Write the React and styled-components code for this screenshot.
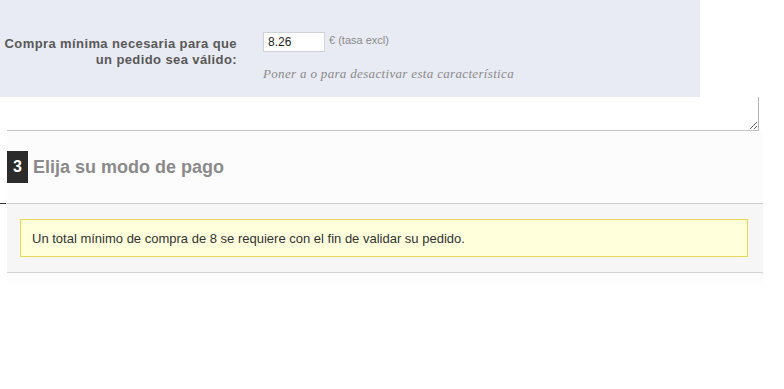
import React from "react"
import styled, {createGlobalStyle} from "styled-components"

const GlobalStyle = createGlobalStyle`
  body {
    margin: 0;
    background: #ffffff;
    font-family: "Liberation Sans", Arial, sans-serif;
  }
`

const Page = styled.div`
  width: 784px;
  height: 389px;
  overflow: hidden;
  background: #ffffff;
`

const SettingsPanel = styled.div`
  width: 700px;
  height: 97px;
  box-sizing: border-box;
  padding-top: 32px;
  background: #e8ebf3;
  display: flex;
  align-items: flex-start;
`

const FieldLabel = styled.label`
  width: 237px;
  padding-top: 4px;
  text-align: right;
  font-size: 13px;
  line-height: 16px;
  font-weight: bold;
  letter-spacing: 0.4px;
  color: #585858;
`

const FieldBody = styled.div`
  margin-left: 26px;
  display: flex;
  flex-direction: column;
`

const InputRow = styled.div`
  display: flex;
  align-items: flex-start;
`

const AmountInput = styled.input`
  width: 62px;
  height: 20px;
  box-sizing: border-box;
  padding: 0 4px;
  border: 1px solid #cfd2d8;
  background: #ffffff;
  font-family: "Liberation Sans", Arial, sans-serif;
  font-size: 12px;
  color: #222;
  outline: none;
`

const Unit = styled.span`
  margin-left: 4px;
  margin-top: 2px;
  font-size: 11px;
  color: #8a8a8a;
`

const Hint = styled.p`
  margin: 14px 0 0;
  font-family: "Liberation Serif", Georgia, serif;
  font-style: italic;
  font-size: 13px;
  letter-spacing: 0.33px;
  color: #8a8a8a;
`

const Notes = styled.textarea`
  display: block;
  margin-left: 7px;
  width: 752px;
  height: 34px;
  box-sizing: border-box;
  border: none;
  border-right: 1px solid #b4b4b4;
  border-bottom: 1px solid #c4c4c4;
  background: #ffffff;
  resize: both;
  outline: none;
`

const Step = styled.section`
  position: relative;
  margin-left: 7px;
  width: 756px;
  background: #fcfcfc;
`

const StepHeader = styled.h2`
  margin: 0;
  padding: 20px 0 20px;
  display: flex;
  align-items: center;
  gap: 5px;
  font-size: 18px;
  font-weight: bold;
  color: #8a8a8a;
  border-bottom: 1px solid #cccccc;

  &::before {
    content: "";
    position: absolute;
    left: -7px;
    top: 72px;
    width: 6px;
    height: 1px;
    background: #333;
  }
`

const StepNumber = styled.span`
  width: 21px;
  height: 32px;
  display: flex;
  align-items: center;
  justify-content: center;
  background: #2b2b2b;
  color: #ffffff;
  font-size: 16px;
`

const StepBody = styled.div`
  padding: 15px 15px 15px 13px;
  background: #f6f6f6;
  border-bottom: 1px solid #d4d4d4;
`

const Warning = styled.div`
  height: 38px;
  box-sizing: border-box;
  padding: 0 11px;
  display: flex;
  align-items: center;
  background: #ffffdc;
  border: 1px solid #e6db55;
  font-size: 13px;
  color: #333333;
`

const Fade = styled.div`
  margin-left: 7px;
  width: 756px;
  height: 16px;
  background: linear-gradient(#fbfbfb, #ffffff);
`

export default function App() {
  return (
    <Page>
      <GlobalStyle />
      <SettingsPanel>
        <FieldLabel htmlFor="min-amount">
          Compra mínima necesaria para que
          <br />
          un pedido sea válido:
        </FieldLabel>
        <FieldBody>
          <InputRow>
            <AmountInput id="min-amount" defaultValue="8.26" />
            <Unit>€ (tasa excl)</Unit>
          </InputRow>
          <Hint>Poner a o para desactivar esta característica</Hint>
        </FieldBody>
      </SettingsPanel>
      <Notes />
      <Step>
        <StepHeader>
          <StepNumber>3</StepNumber>
          Elija su modo de pago
        </StepHeader>
        <StepBody>
          <Warning>
            Un total mínimo de compra de 8 se requiere con el fin de validar su pedido.
          </Warning>
        </StepBody>
      </Step>
      <Fade />
    </Page>
  )
}
